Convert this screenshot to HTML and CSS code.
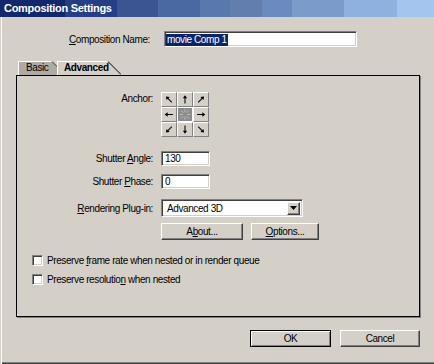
FILE: index.html
```html
<!DOCTYPE html>
<html>
<head>
<meta charset="utf-8">
<link rel="stylesheet" href="styles.css">
</head>
<body>
<div class="win">
  <div class="titlebar"><span class="title">Composition Settings</span></div>

  <div class="name-row">
    <span class="name-label"><u>C</u>omposition Name:</span>
    <div class="field name-field"><span class="sel">movie Comp 1</span></div>
  </div>

  <div class="tabs">
    <div class="tab tab-basic">
      <svg class="tab-shape" width="40" height="14" viewBox="0 0 40 14"><path d="M0 14V0H34L40 6V14Z" fill="#aeaaa4"/><path d="M0.5 14V0.5H34" stroke="#fff" fill="none"/><path d="M34 0.5L40 6.5" stroke="#404040" fill="none"/></svg>
      <span class="tab-text">Basic</span>
    </div>
    <div class="tab tab-adv">
      <svg class="tab-shape" width="64" height="14" viewBox="0 0 64 14"><path d="M0 14V0H51L64 13V14Z" fill="#d4d0c8"/><path d="M0.5 14V0.5H51" stroke="#fff" fill="none"/><path d="M51 0.5L64 13.5" stroke="#000" fill="none"/></svg>
      <span class="tab-text bold">Advanced</span>
    </div>
  </div>

  <div class="panel">
    <div class="form">
      <span class="lbl lbl-anchor">Anchor:</span>
      <div class="anchor">
        <div class="cell"><svg viewBox="0 0 16 15"><g transform="rotate(-45 8 7.5)"><path d="M8 12V5" stroke="#000" stroke-width="1.2"/><path d="M8 2.5L5.5 6H10.5Z"/></g></svg></div>
        <div class="cell"><svg viewBox="0 0 16 15"><g><path d="M8 12V5" stroke="#000" stroke-width="1.2"/><path d="M8 2.5L5.5 6H10.5Z"/></g></svg></div>
        <div class="cell"><svg viewBox="0 0 16 15"><g transform="rotate(45 8 7.5)"><path d="M8 12V5" stroke="#000" stroke-width="1.2"/><path d="M8 2.5L5.5 6H10.5Z"/></g></svg></div>
        <div class="cell"><svg viewBox="0 0 16 15"><g transform="rotate(-90 8 7.5)"><path d="M8 12V5" stroke="#000" stroke-width="1.2"/><path d="M8 2.5L5.5 6H10.5Z"/></g></svg></div>
        <div class="cell center"><svg viewBox="0 0 16 15"><g stroke="#c8c8c8" stroke-width="1"><path d="M8 1.5V5M8 10V13.5M2 7.5H5.5M10.5 7.5H14M3.5 3L6 5.5M12.5 3L10 5.5M3.5 12L6 9.5M12.5 12L10 9.5"/></g></svg></div>
        <div class="cell"><svg viewBox="0 0 16 15"><g transform="rotate(90 8 7.5)"><path d="M8 12V5" stroke="#000" stroke-width="1.2"/><path d="M8 2.5L5.5 6H10.5Z"/></g></svg></div>
        <div class="cell"><svg viewBox="0 0 16 15"><g transform="rotate(-135 8 7.5)"><path d="M8 12V5" stroke="#000" stroke-width="1.2"/><path d="M8 2.5L5.5 6H10.5Z"/></g></svg></div>
        <div class="cell"><svg viewBox="0 0 16 15"><g transform="rotate(180 8 7.5)"><path d="M8 12V5" stroke="#000" stroke-width="1.2"/><path d="M8 2.5L5.5 6H10.5Z"/></g></svg></div>
        <div class="cell"><svg viewBox="0 0 16 15"><g transform="rotate(135 8 7.5)"><path d="M8 12V5" stroke="#000" stroke-width="1.2"/><path d="M8 2.5L5.5 6H10.5Z"/></g></svg></div>
      </div>

      <span class="lbl lbl-angle">Shutter <u>A</u>ngle:</span>
      <div class="field small-field row-angle">130</div>

      <span class="lbl lbl-phase">Shutter <u>P</u>hase:</span>
      <div class="field small-field row-phase">0</div>

      <span class="lbl lbl-plugin"><u>R</u>endering Plug-in:</span>
      <div class="field select row-plugin">
        <span class="select-text">Advanced 3D</span>
        <span class="select-btn"><svg width="7" height="4" viewBox="0 0 7 4"><path d="M0 0H7L3.5 4Z" fill="#000"/></svg></span>
      </div>

      <span></span>
      <div class="btn-row">
        <div class="btn btn-about">A<u>b</u>out...</div>
        <div class="btn btn-options"><u>O</u>ptions...</div>
      </div>
    </div>

    <div class="check-row first">
      <span class="checkbox"></span>
      <span class="check-label">Preserve <u>f</u>rame rate when nested or in render queue</span>
    </div>
    <div class="check-row">
      <span class="checkbox"></span>
      <span class="check-label">Preserve resolutio<u>n</u> when nested</span>
    </div>
  </div>

  <div class="actions">
    <div class="btn btn-ok">OK</div>
    <div class="btn btn-cancel">Cancel</div>
  </div>
</div>
</body>
</html>
```

FILE: styles.css
```css
html, body {
  margin: 0;
  padding: 0;
}
body {
  width: 434px;
  height: 364px;
  overflow: hidden;
  font-family: "Liberation Sans", Arial, sans-serif;
  font-size: 10px;
  letter-spacing: -0.4px;
  color: #000;
  background: #d4d0c8;
}
u { text-decoration: underline; text-underline-offset: 1px; }

.win {
  height: 364px;
  background: #d4d0c8;
  display: flex;
  flex-direction: column;
  box-shadow: inset 1px 0 0 #d4d0c8, inset 2px 0 0 #fff, inset 0 -1px 0 #404040, inset 0 -2px 0 #808080;
}

.titlebar {
  height: 17px;
  flex: none;
  background: linear-gradient(to right,
    #12286e 0px, #12286e 65px,
    #243f86 65px, #243f86 117px,
    #3a5592 117px, #3a5592 158px,
    #4a68a2 158px, #4a68a2 200px,
    #5978ab 200px, #5978ab 230px,
    #617eae 230px, #617eae 262px,
    #6b8bc0 262px, #6b8bc0 292px,
    #7b9bcb 292px, #7b9bcb 344px,
    #8fb1df 344px, #8fb1df 397px,
    #a4c6ee 397px, #a4c6ee 434px);
}
.title {
  display: block;
  padding-left: 4px;
  line-height: 17px;
  color: #fff;
  font-weight: bold;
  font-size: 11px;
  letter-spacing: -0.3px;
}

.field {
  box-sizing: border-box;
  background: #fff;
  border-style: solid;
  border-width: 1px;
  border-color: #808080 #fff #fff #808080;
  box-shadow: inset 1px 1px 0 #404040, inset -1px -1px 0 #d4d0c8;
}

.name-row {
  margin-top: 14px;
  height: 16px;
  display: flex;
  align-items: center;
}
.name-label {
  width: 150px;
  text-align: right;
}
.name-field {
  margin-left: 14px;
  width: 193px;
  height: 16px;
  padding: 1px 0 0 1px;
  display: flex;
  align-items: center;
}
.sel {
  background: #0a246a;
  color: #fff;
  line-height: 12px;
  padding: 0 1px;
}

.tabs {
  margin-top: 14px;
  margin-left: 18px;
  height: 14px;
  display: flex;
}
.tab {
  position: relative;
  height: 14px;
  display: flex;
  align-items: center;
}
.tab-shape {
  position: absolute;
  left: 0;
  top: 0;
}
.tab-text {
  position: relative;
  line-height: 14px;
}
.tab-basic {
  width: 40px;
  padding-left: 8px;
  box-sizing: border-box;
}
.tab-adv {
  width: 64px;
  margin-left: -1px;
  padding-left: 7px;
  box-sizing: border-box;
  z-index: 1;
}
.bold { font-weight: bold; }

.panel {
  margin-left: 16px;
  width: 404px;
  height: 242px;
  box-sizing: border-box;
  border: 1px solid #000;
  box-shadow: 1px 1px 0 #808080;
  padding-top: 16px;
}

.form {
  display: grid;
  grid-template-columns: 136px auto;
  column-gap: 8px;
  align-items: center;
}
.lbl {
  text-align: right;
}
.lbl-anchor {
  align-self: start;
  margin-top: 1px;
}

.anchor {
  display: grid;
  grid-template-columns: repeat(3, 16px);
  grid-template-rows: repeat(3, 15px);
  width: 48px;
}
.cell {
  box-sizing: border-box;
  width: 16px;
  height: 15px;
  background: #d4d0c8;
  border-style: solid;
  border-width: 1px;
  border-color: #fff #808080 #808080 #fff;
}
.cell svg {
  display: block;
  width: 14px;
  height: 13px;
}
.cell.center {
  background: #8c8c8c;
  border-color: #fff #fff #fff #fff;
}

.small-field {
  width: 49px;
  height: 15px;
  padding-left: 3px;
  line-height: 13px;
}
.row-angle { margin-top: 14px; }
.lbl-angle { margin-top: 14px; }
.row-phase { margin-top: 8px; }
.lbl-phase { margin-top: 8px; }
.row-plugin { margin-top: 10px; }
.lbl-plugin { margin-top: 10px; }

.select {
  width: 142px;
  height: 18px;
  display: flex;
  align-items: center;
  justify-content: space-between;
  padding: 2px 2px 2px 5px;
}
.select-btn {
  box-sizing: border-box;
  width: 13px;
  height: 13px;
  background: #d4d0c8;
  border-style: solid;
  border-width: 1px;
  border-color: #fff #404040 #404040 #fff;
  box-shadow: inset -1px -1px 0 #808080;
  display: flex;
  align-items: center;
  justify-content: center;
}
.select-btn svg { display: block; }

.btn-row {
  margin-top: 6px;
  display: flex;
  gap: 8px;
}
.btn {
  box-sizing: border-box;
  height: 17px;
  display: flex;
  align-items: center;
  justify-content: center;
  background: #d4d0c8;
  border-style: solid;
  border-width: 1px;
  border-color: #fff #404040 #404040 #fff;
  box-shadow: inset -1px -1px 0 #808080;
}
.btn-about { width: 82px; }
.btn-options { width: 68px; }

.check-row {
  margin-top: 8px;
  margin-left: 15px;
  height: 11px;
  display: flex;
  align-items: center;
  gap: 4px;
}
.check-row.first { margin-top: 15px; }
.checkbox {
  box-sizing: border-box;
  width: 11px;
  height: 11px;
  background: #fff;
  border-style: solid;
  border-width: 1px;
  border-color: #808080 #fff #fff #808080;
  box-shadow: inset 1px 1px 0 #404040, inset -1px -1px 0 #d4d0c8;
}

.actions {
  margin-top: 13px;
  padding-right: 14px;
  display: flex;
  justify-content: flex-end;
  gap: 9px;
}
.btn-ok {
  width: 81px;
  border: 1px solid #000;
  box-shadow: inset 1px 1px 0 #fff, inset -1px -1px 0 #808080;
}
.btn-cancel { width: 80px; }
```
